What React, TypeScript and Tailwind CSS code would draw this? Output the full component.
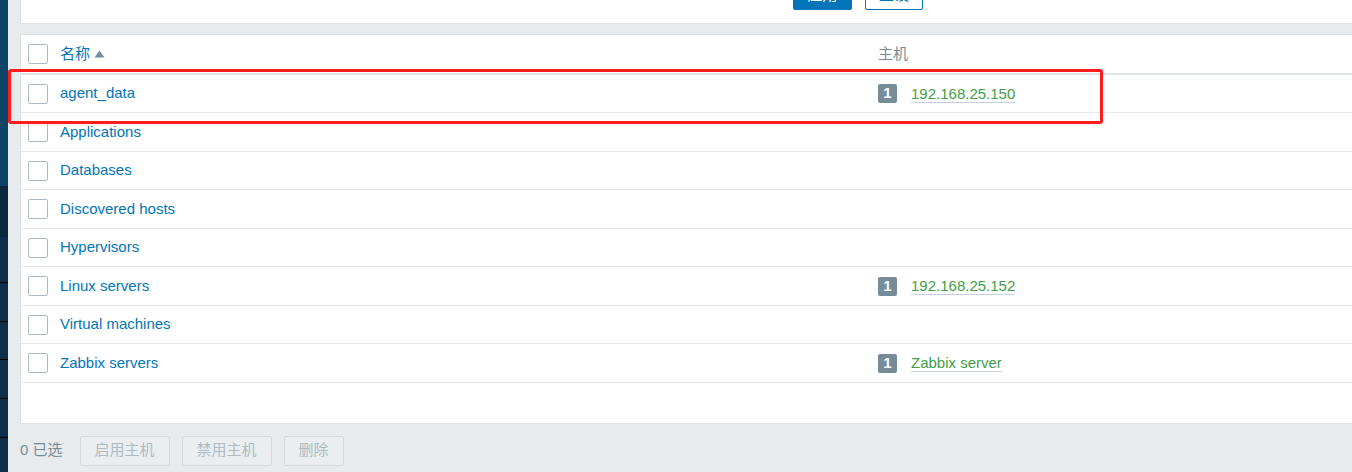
import React from "react";

const rows: { name: string; host?: string }[] = [
  { name: "agent_data", host: "192.168.25.150" },
  { name: "Applications" },
  { name: "Databases" },
  { name: "Discovered hosts" },
  { name: "Hypervisors" },
  { name: "Linux servers", host: "192.168.25.152" },
  { name: "Virtual machines" },
  { name: "Zabbix servers", host: "Zabbix server" },
];

function Checkbox() {
  return <div className="w-[20px] h-[20px] shrink-0 rounded-[2px] border border-[#acbbc2] bg-white" />;
}

export default function App() {
  return (
    <div
      className="relative flex h-[472px] w-[1352px] overflow-hidden text-[15px]"
      style={{ fontFamily: '"Liberation Sans", Arial, "Noto Sans CJK SC", sans-serif' }}
    >
      {/* sidebar strip */}
      <div className="flex w-[8px] shrink-0 flex-col">
        <div className="h-[186px] bg-[#0c4466]" />
        <div className="h-[51px] bg-[#0a293d]" />
        <div className="h-[46px] border-b border-black bg-[#0e2f49]" />
        <div className="h-[39px] border-b border-black bg-[#0e2f49]" />
        <div className="h-[38px] border-b border-black bg-[#0e2f49]" />
        <div className="h-[39px] border-b border-black bg-[#0e2f49]" />
        <div className="h-[39px] border-b border-black bg-[#0e2f49]" />
        <div className="flex-1 bg-[#0e2f49]" />
      </div>

      {/* main */}
      <div className="flex flex-1 flex-col bg-[#e8ebee] pl-[12px]">
        {/* filter panel bottom */}
        <div className="relative h-[24px] shrink-0 border-b border-l border-[#dde2e6] bg-white">
          <div className="absolute left-[772px] top-[-20px] flex gap-[13px]">
            <div className="flex h-[30px] w-[59px] items-center justify-center rounded-[2px] bg-[#0275b8] text-white">应用</div>
            <div className="flex h-[30px] w-[58px] items-center justify-center rounded-[2px] border border-[#0275b8] bg-white text-[#0275b8]">重设</div>
          </div>
        </div>
        <div className="h-[10px] shrink-0" />

        {/* table panel */}
        <div className="flex h-[390px] shrink-0 flex-col border-l border-t border-b border-[#dde2e6] bg-white">
          <div className="flex h-[40px] shrink-0 items-center border-b-2 border-[#dfe4e7]">
            <div className="w-[39px] shrink-0 pl-[7px]">
              <Checkbox />
            </div>
            <div className="flex w-[818px] shrink-0 items-center text-[#0275b8]">
              名称
              <svg width="11" height="8" viewBox="0 0 11 8" className="ml-[4px]">
                <path d="M0.5 7.5 L5.5 0.5 L10.5 7.5 Z" fill="#768d99" />
              </svg>
            </div>
            <div className="text-[#768d99]">主机</div>
          </div>
          {rows.map((r, i) => (
            <div
              key={r.name}
              className={`flex shrink-0 items-center border-b border-[#e6e9ec] ${i % 2 === 0 ? "h-[38px]" : "h-[39px]"}`}
            >
              <div className="w-[39px] shrink-0 pl-[7px]">
                <Checkbox />
              </div>
              <div className="w-[818px] shrink-0 text-[#0275b8]">{r.name}</div>
              {r.host && (
                <div className="flex items-center">
                  <span className="flex h-[19px] w-[19px] items-center justify-center rounded-[2px] bg-[#768d99] text-[15px] font-bold text-white">
                    1
                  </span>
                  <span className="ml-[14px] border-b border-[#c9d2d7] leading-[17px] text-[#429e47]">{r.host}</span>
                </div>
              )}
            </div>
          ))}
        </div>

        {/* footer */}
        <div className="flex flex-1 items-center pt-[5px]">
          <span className="mr-[17px] text-[#768d99]">0 已选</span>
          <div className="flex gap-[12px]">
            {["启用主机", "禁用主机", "删除"].map((t) => (
              <div
                key={t}
                className="flex h-[30px] items-center justify-center rounded-[2px] border border-[#d2d9dd] bg-[#ebeef0] px-[14px] text-[#acbbc2]"
              >
                {t}
              </div>
            ))}
          </div>
        </div>
      </div>

      {/* red annotation */}
      <div className="pointer-events-none absolute left-[8px] top-[69px] h-[55px] w-[1095px] rounded-[3px] border-[3px] border-[#ff1c1c]" />
    </div>
  );
}
